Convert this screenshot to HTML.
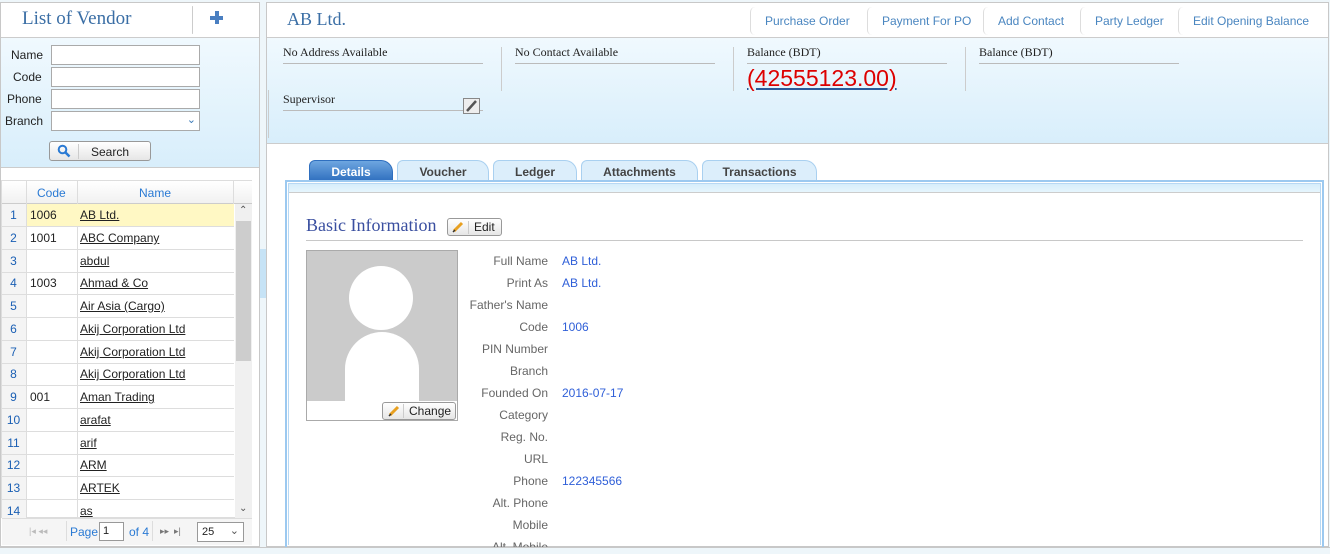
<!DOCTYPE html>
<html><head><meta charset="utf-8"><style>
*{box-sizing:border-box;margin:0;padding:0}
body{width:1330px;height:551px;background:#eef6fa;font-family:"Liberation Sans",sans-serif;font-size:12px;position:relative;overflow:hidden;color:#222}
.a{position:absolute}
.serif{font-family:"Liberation Serif",serif}
.inp{position:absolute;left:51px;width:149px;height:20px;border:1px solid #aaa;background:#fff}
.row{position:absolute;left:1px;width:233px;height:23px;border-bottom:1px solid #ddd}
.row span{position:absolute;top:4px}
.rn{left:0;width:25px;text-align:center;color:#1a5fb4}
.cd{left:29px}
.nm{left:79px;text-decoration:underline}
.btn{position:absolute;height:20px;border:1px solid #999;border-radius:3px;background:linear-gradient(#fff,#e6e6e6);font-size:12px}
.tab{position:absolute;top:160px;height:21px;background:#dceefb;border:1px solid #a9d0f0;border-bottom:none;border-radius:6px 12px 0 0;color:#444;font-weight:600;text-align:center;line-height:22px}
.lab{position:absolute;left:440px;width:108px;text-align:right;color:#666}
.val{position:absolute;left:562px;color:#2f5fd8}
.hb{position:absolute;top:7px;height:28px;border-left:1px solid #ddd;border-radius:5px 0 0 5px;color:#4a86c0;font-size:12px;line-height:28px;padding-left:14px}
.ilab{position:absolute;font-family:"Liberation Serif",serif;font-size:12px;color:#222;border-bottom:1px solid #bbb;height:26px;padding-top:7px}
</style></head><body>

<div class="a" style="left:0;top:2px;width:260px;height:545px;border:1px solid #c8c8c8;background:#fff"></div>
<div class="a serif" style="left:22px;top:8px;font-size:19px;color:#3a6ea5">List of Vendor</div>
<div class="a" style="left:192px;top:6px;width:1px;height:28px;background:#ccc;border-radius:4px"></div>
<div class="a" style="left:210px;top:11px;width:13px;height:13px">
<div class="a" style="left:5px;top:0;width:4px;height:13px;background:#4a7fc1"></div>
<div class="a" style="left:0;top:5px;width:13px;height:4px;background:#4a7fc1"></div></div>
<div class="a" style="left:1px;top:37px;width:258px;height:131px;border-top:1px solid #ccc;border-bottom:1px solid #ccc;background:linear-gradient(#f0f9fe,#d8eefb)"></div>
<div class="a" style="left:11px;top:48px">Name</div>
<div class="a" style="left:13px;top:70px">Code</div>
<div class="a" style="left:7px;top:92px">Phone</div>
<div class="a" style="left:5px;top:114px">Branch</div>
<div class="inp" style="top:45px"></div><div class="inp" style="top:67px"></div><div class="inp" style="top:89px"></div><div class="inp" style="top:111px"><span class="a" style="right:3px;top:1px;color:#3a7ab8;font-size:11px">&#8964;</span></div>
<div class="btn" style="left:49px;top:141px;width:102px">
<svg class="a" style="left:7px;top:2px" width="14" height="14"><circle cx="5.5" cy="5.5" r="3.8" fill="none" stroke="#2a7ad4" stroke-width="2"/><line x1="8" y1="8" x2="12.5" y2="12.5" stroke="#2a7ad4" stroke-width="2.5"/></svg>
<div class="a" style="left:28px;top:2px;width:1px;height:15px;background:#ccc"></div>
<span class="a" style="left:41px;top:3px">Search</span></div>

<div class="a" style="left:1px;top:180px;width:251px;height:338px;border:1px solid #ddd"></div>
<div class="a" style="left:2px;top:181px;width:250px;height:23px;background:linear-gradient(#fff,#f1f1f1);border-bottom:1px solid #ccc"></div>
<div class="a" style="left:26px;top:181px;width:1px;height:23px;background:#ddd"></div>
<div class="a" style="left:77px;top:181px;width:1px;height:23px;background:#ddd"></div>
<div class="a" style="left:233px;top:181px;width:1px;height:23px;background:#ddd"></div>
<div class="a" style="left:37px;top:186px;color:#2a7ad4">Code</div>
<div class="a" style="left:139px;top:186px;color:#2a7ad4">Name</div>
<div class="a" style="left:26px;top:204px;width:1px;height:314px;background:#ddd"></div>
<div class="a" style="left:77px;top:204px;width:1px;height:314px;background:#ddd"></div>
<div class="a" style="left:2px;top:204px;width:24px;height:314px;background:#f4f4f4"></div>
<div class="row" style="top:204px;background:#fff8c4;left:27px;width:207px"></div>
<div class="row" style="top:204px"><span class="rn">1</span><span class="cd">1006</span><span class="nm">AB Ltd.</span></div>
<div class="row" style="top:227px"><span class="rn">2</span><span class="cd">1001</span><span class="nm">ABC Company</span></div>
<div class="row" style="top:250px"><span class="rn">3</span><span class="nm">abdul</span></div>
<div class="row" style="top:272px"><span class="rn">4</span><span class="cd">1003</span><span class="nm">Ahmad &amp; Co</span></div>
<div class="row" style="top:295px"><span class="rn">5</span><span class="nm">Air Asia (Cargo)</span></div>
<div class="row" style="top:318px"><span class="rn">6</span><span class="nm">Akij Corporation Ltd</span></div>
<div class="row" style="top:341px"><span class="rn">7</span><span class="nm">Akij Corporation Ltd</span></div>
<div class="row" style="top:363px"><span class="rn">8</span><span class="nm">Akij Corporation Ltd</span></div>
<div class="row" style="top:386px"><span class="rn">9</span><span class="cd">001</span><span class="nm">Aman Trading</span></div>
<div class="row" style="top:409px"><span class="rn">10</span><span class="nm">arafat</span></div>
<div class="row" style="top:432px"><span class="rn">11</span><span class="nm">arif</span></div>
<div class="row" style="top:454px"><span class="rn">12</span><span class="nm">ARM</span></div>
<div class="row" style="top:477px"><span class="rn">13</span><span class="nm">ARTEK</span></div>
<div class="row" style="top:500px;border-bottom:none"><span class="rn">14</span><span class="nm">as</span></div>
<div class="a" style="left:235px;top:204px;width:17px;height:314px;background:#f0f0f0"></div>
<div class="a" style="left:236px;top:221px;width:15px;height:140px;background:#cdcdcd"></div>
<div class="a" style="left:239px;top:205px;font-size:10px;color:#555">&#8963;</div>
<div class="a" style="left:239px;top:503px;font-size:10px;color:#555">&#8964;</div>
<div class="a" style="left:2px;top:518px;width:250px;height:27px;background:#f5f5f5;border-top:1px solid #ddd"></div>
<div class="a" style="left:29px;top:526px;font-size:9px;color:#bbb">|◂ ◂◂</div>
<div class="a" style="left:66px;top:521px;width:1px;height:20px;background:#ddd"></div>
<div class="a" style="left:70px;top:525px;color:#2a7ad4">Page</div>
<div class="a" style="left:99px;top:522px;width:25px;height:19px;border:1px solid #999;background:#fff;font-size:11px;padding:2px 3px">1</div>
<div class="a" style="left:129px;top:525px;color:#2a7ad4">of 4</div>
<div class="a" style="left:152px;top:521px;width:1px;height:20px;background:#ddd"></div>
<div class="a" style="left:160px;top:526px;font-size:9px;color:#777">▸▸ &nbsp;▸|</div>
<div class="a" style="left:197px;top:522px;width:47px;height:20px;border:1px solid #999;background:#fff;font-size:11px;padding:3px 4px">25<span class="a" style="right:4px;top:1px;color:#555">&#8964;</span></div>

<div class="a" style="left:260px;top:249px;width:6px;height:49px;background:#c6e3f6"></div>

<div class="a" style="left:266px;top:2px;width:1063px;height:545px;border:1px solid #c8c8c8;background:#fff"></div>
<div class="a serif" style="left:287px;top:9px;font-size:18px;color:#3a6ea5">AB Ltd.</div>
<div class="hb" style="left:750px">Purchase Order</div>
<div class="hb" style="left:867px">Payment For PO</div>
<div class="hb" style="left:983px">Add Contact</div>
<div class="hb" style="left:1080px">Party Ledger</div>
<div class="hb" style="left:1178px">Edit Opening Balance</div>
<div class="a" style="left:267px;top:37px;width:1061px;height:107px;border-top:1px solid #ccc;border-bottom:1px solid #ccc;background:linear-gradient(#f0f9fe,#d8eefb)"></div>
<div class="a" style="left:268px;top:90px;width:1px;height:48px;background:#ccc"></div>
<div class="ilab" style="left:283px;top:38px;width:200px">No Address Available</div>
<div class="ilab" style="left:515px;top:38px;width:200px">No Contact Available</div>
<div class="ilab" style="left:747px;top:38px;width:200px">Balance (BDT)</div>
<div class="ilab" style="left:979px;top:38px;width:200px">Balance (BDT)</div>
<div class="a" style="left:501px;top:47px;width:1px;height:44px;background:#ccc"></div>
<div class="a" style="left:733px;top:47px;width:1px;height:44px;background:#ccc"></div>
<div class="a" style="left:965px;top:47px;width:1px;height:44px;background:#ccc"></div>
<div class="a" style="left:747px;top:65px;font-size:23px;color:#d00;text-decoration:underline;text-decoration-color:#2a5a9a">(42555123.00)</div>
<div class="ilab" style="left:283px;top:85px;width:200px">Supervisor</div>
<div class="a" style="left:463px;top:98px;width:17px;height:16px;border:1px solid #888;background:#eee">
<svg width="15" height="14"><line x1="3" y1="12" x2="12" y2="2" stroke="#555" stroke-width="2.5"/></svg></div>

<div class="tab" style="left:309px;width:84px;background:linear-gradient(#6ea6e0,#2f6fbf);color:#fff;border-color:#2f6fbf">Details</div>
<div class="tab" style="left:397px;width:92px">Voucher</div>
<div class="tab" style="left:493px;width:84px">Ledger</div>
<div class="tab" style="left:581px;width:117px">Attachments</div>
<div class="tab" style="left:702px;width:115px">Transactions</div>
<div class="a" style="left:285px;top:180px;width:1039px;height:368px;border:2px solid #9cc9f0;border-bottom:none"></div>
<div class="a" style="left:288px;top:183px;width:1033px;height:362px;border:1px solid #b7d8f4;border-bottom:none;background:#fff"></div>
<div class="a" style="left:289px;top:184px;width:1031px;height:9px;background:linear-gradient(#d6edfb,#e6f5fd);border-bottom:1px solid #ccc"></div>

<div class="a serif" style="left:306px;top:215px;font-size:18px;color:#3a4fa0">Basic Information</div>
<div class="btn" style="left:447px;top:218px;width:55px;height:18px">
<svg class="a" style="left:4px;top:2px" width="12" height="12"><line x1="2" y1="10" x2="10" y2="2" stroke="#e8a020" stroke-width="3"/><line x1="1" y1="11" x2="3" y2="9" stroke="#333" stroke-width="1.5"/></svg>
<div class="a" style="left:20px;top:2px;width:1px;height:13px;background:#ccc"></div>
<span class="a" style="left:26px;top:1px">Edit</span></div>
<div class="a" style="left:306px;top:240px;width:997px;height:1px;background:#c8c8c8"></div>

<div class="a" style="left:306px;top:250px;width:152px;height:171px;border:1px solid #aaa;background:#fff"></div>
<div class="a" style="left:307px;top:251px;width:150px;height:150px;background:#cbcbcb;overflow:hidden">
<div class="a" style="left:42px;top:15px;width:64px;height:64px;border-radius:50%;background:#fff"></div>
<div class="a" style="left:38px;top:81px;width:74px;height:90px;border-radius:37px 37px 0 0;background:#fff"></div></div>
<div class="btn" style="left:382px;top:402px;width:74px;height:18px">
<svg class="a" style="left:5px;top:2px" width="12" height="12"><line x1="2" y1="10" x2="10" y2="2" stroke="#e8a020" stroke-width="3"/><line x1="1" y1="11" x2="3" y2="9" stroke="#333" stroke-width="1.5"/></svg>
<div class="a" style="left:20px;top:1px;width:1px;height:14px;background:#ccc"></div>
<span class="a" style="left:26px;top:1px">Change</span></div>

<div class="lab" style="top:254px">Full Name</div><div class="val" style="top:254px">AB Ltd.</div>
<div class="lab" style="top:276px">Print As</div><div class="val" style="top:276px">AB Ltd.</div>
<div class="lab" style="top:298px">Father's Name</div>
<div class="lab" style="top:320px">Code</div><div class="val" style="top:320px">1006</div>
<div class="lab" style="top:342px">PIN Number</div>
<div class="lab" style="top:364px">Branch</div>
<div class="lab" style="top:386px">Founded On</div><div class="val" style="top:386px">2016-07-17</div>
<div class="lab" style="top:408px">Category</div>
<div class="lab" style="top:430px">Reg. No.</div>
<div class="lab" style="top:452px">URL</div>
<div class="lab" style="top:474px">Phone</div><div class="val" style="top:474px">122345566</div>
<div class="lab" style="top:496px">Alt. Phone</div>
<div class="lab" style="top:518px">Mobile</div>
<div class="lab" style="top:540px">Alt. Mobile</div>
<div class="a" style="left:0;top:547px;width:1330px;height:4px;background:#eef6fa;border-top:1px solid #c8c8c8"></div>
</body></html>
